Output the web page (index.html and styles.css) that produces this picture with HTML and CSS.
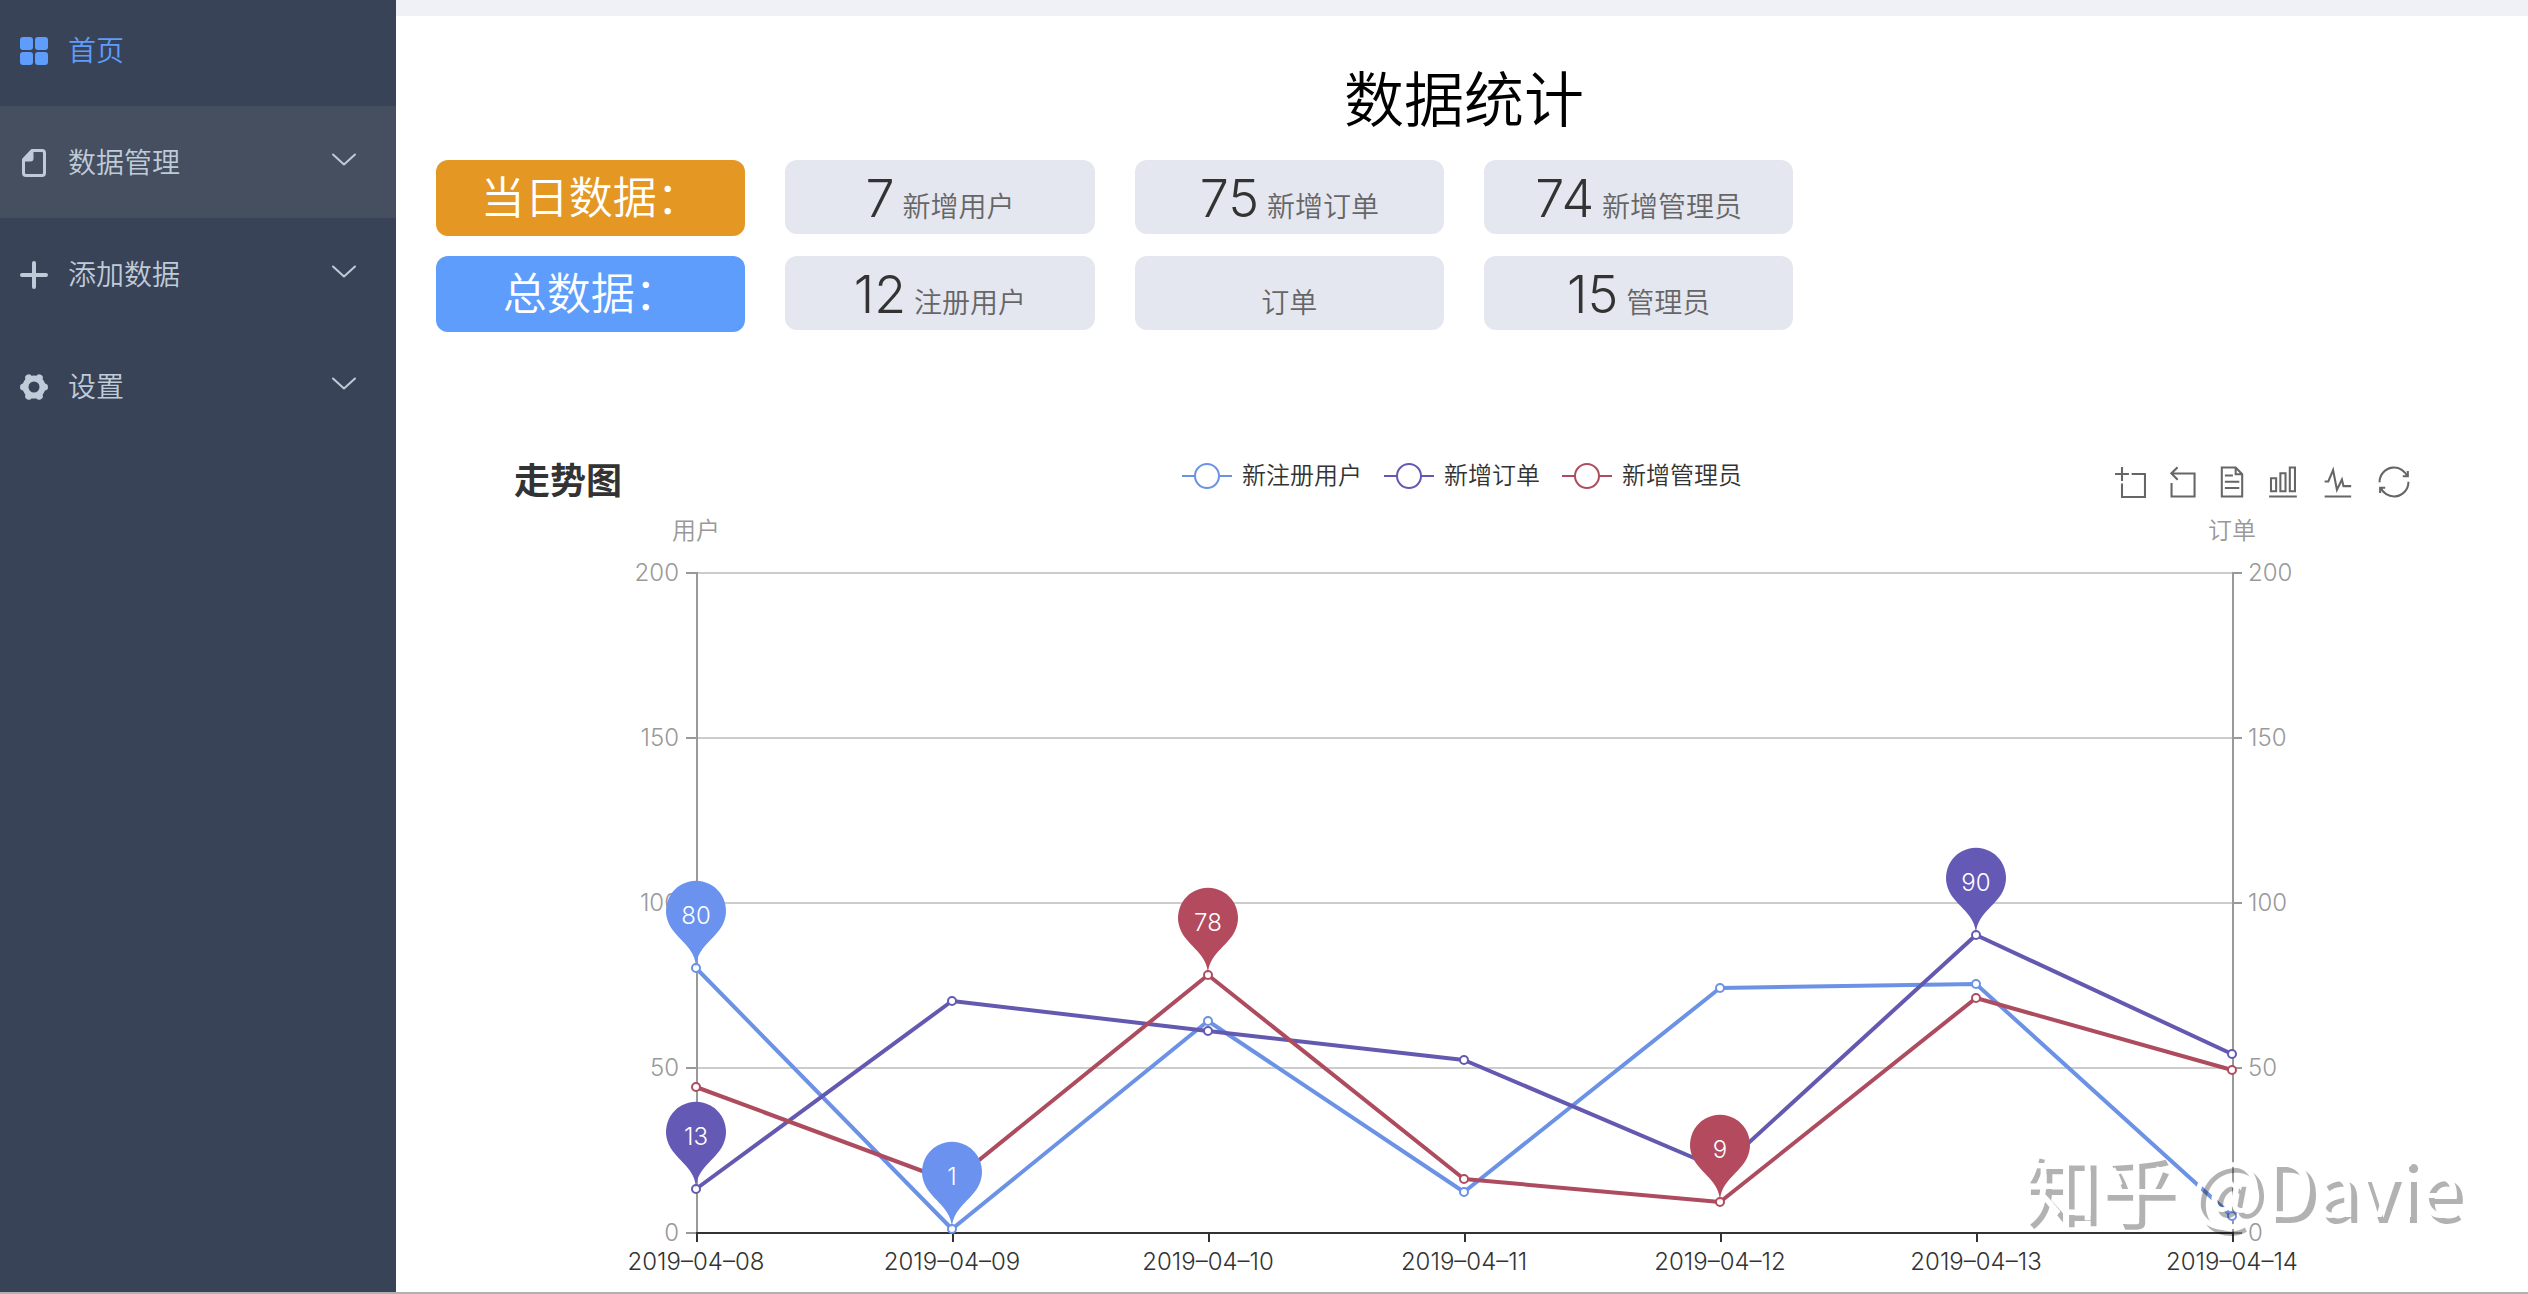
FILE: index.html
```html
<!DOCTYPE html>
<html lang="zh-CN">
<head>
<meta charset="utf-8">
<title>数据统计</title>
<link rel="stylesheet" href="styles.css">
</head>
<body>
<div class="layout">
  <nav class="sidebar">
    <a class="nav-item is-active" href="#home">
      <svg class="nav-icon" viewBox="0 0 28 28" fill="currentColor"><rect x="0" y="0" width="13" height="13" rx="3"/><rect x="15" y="0" width="13" height="13" rx="3"/><rect x="0" y="15" width="13" height="13" rx="3"/><rect x="15" y="15" width="13" height="13" rx="3"/></svg>
      <span class="nav-text">首页</span>
    </a>
    <button class="nav-item is-hover" type="button">
      <svg class="nav-icon" viewBox="0 0 28 28" fill="none" stroke="currentColor" stroke-width="3" stroke-linejoin="round"><path d="M12 1.500H22Q24.500 1.500 24.500 4V24Q24.500 26.500 22 26.500H6Q3.500 26.500 3.500 24V10.500Z"/><path d="M4 11L12 2V9.500Q12 11 10.500 11Z" fill="currentColor"/></svg>
      <span class="nav-text">数据管理</span>
      <svg class="nav-arrow" viewBox="0 0 24 14" fill="none" stroke="currentColor" stroke-width="2" stroke-linecap="round" stroke-linejoin="round"><path d="M1 1.500L12 11.500L23 1.500"/></svg>
    </button>
    <button class="nav-item" type="button">
      <svg class="nav-icon" viewBox="0 0 28 28" fill="none" stroke="currentColor" stroke-width="4" stroke-linecap="round"><path d="M14 2V26M2 14H26"/></svg>
      <span class="nav-text">添加数据</span>
      <svg class="nav-arrow" viewBox="0 0 24 14" fill="none" stroke="currentColor" stroke-width="2" stroke-linecap="round" stroke-linejoin="round"><path d="M1 1.500L12 11.500L23 1.500"/></svg>
    </button>
    <button class="nav-item" type="button">
      <svg class="nav-icon" viewBox="0 0 28 28" fill="none" stroke="currentColor"><circle cx="14" cy="14" r="8.500" stroke-width="6"/><path stroke-width="7" stroke-linecap="round" d="M3.500 14H4.500M23.500 14H24.500M8.700 4.800L9.200 5.700M18.800 22.300L19.300 23.200M19.300 4.800L18.800 5.700M9.200 22.300L8.700 23.200"/></svg>
      <span class="nav-text">设置</span>
      <svg class="nav-arrow" viewBox="0 0 24 14" fill="none" stroke="currentColor" stroke-width="2" stroke-linecap="round" stroke-linejoin="round"><path d="M1 1.500L12 11.500L23 1.500"/></svg>
    </button>
  </nav>
  <main class="main">
    <section class="stats">
      <h1 class="page-title">数据统计</h1>
      <div class="stat-row">
        <div class="stat-label is-today">当日数据：</div>
        <div class="stat"><span class="num">7</span> 新增用户</div>
        <div class="stat"><span class="num">75</span> 新增订单</div>
        <div class="stat"><span class="num">74</span> 新增管理员</div>
      </div>
      <div class="stat-row">
        <div class="stat-label is-total">总数据：</div>
        <div class="stat"><span class="num">12</span> 注册用户</div>
        <div class="stat"><span class="num"></span> 订单</div>
        <div class="stat"><span class="num">15</span> 管理员</div>
      </div>
    </section>
    <section class="trend">
      <header class="trend-head">
        <h2 class="trend-title">走势图</h2>
        <div class="legend">
          <button class="legend-item" type="button"><svg class="legend-mark blue" viewBox="0 0 50 28"><path d="M0 14H50"/><circle cx="25" cy="14" r="12"/></svg>新注册用户</button>
          <button class="legend-item" type="button"><svg class="legend-mark purple" viewBox="0 0 50 28"><path d="M0 14H50"/><circle cx="25" cy="14" r="12"/></svg>新增订单</button>
          <button class="legend-item" type="button"><svg class="legend-mark red" viewBox="0 0 50 28"><path d="M0 14H50"/><circle cx="25" cy="14" r="12"/></svg>新增管理员</button>
        </div>
        <div class="toolbox">
          <button class="tool" type="button" aria-label="区域缩放"><svg width="32" height="32" viewBox="-2 -2 62 62"><path d="M0,13.5h26.9 M13.5,26.9V0 M32.1,13.5H58V58H13.5 V32.1"/></svg></button>
          <button class="tool" type="button" aria-label="区域缩放还原"><svg width="26" height="32" viewBox="7.500 -1 50 62"><path d="M22,1.4L9.9,13.5l12.3,12.3 M10.3,13.5H54.9v44.6 H10.3v-26"/></svg></button>
          <button class="tool" type="button" aria-label="数据视图"><svg width="24" height="32" viewBox="8 -1 46.500 62"><path d="M17.5,17.3H33 M45.4,29.5h-28 M11.5,2v56H51V14.8L38.4,2H11.5z M38.4,2.2v12.7H51 M45.4,41.7h-28"/></svg></button>
          <button class="tool" type="button" aria-label="柱状图"><svg width="30" height="32" viewBox="1 -1 58 62"><path d="M6.7,22.9h10V48h-10V22.9zM24.9,13h10v35h-10V13zM43.2,2h10v46h-10V2zM3.1,58h53.7"/></svg></button>
          <button class="tool" type="button" aria-label="折线图"><svg width="32" height="32" viewBox="-1 -1 62 62"><path d="M4.1,28.9h7.1l9.3-22l7.4,38l9.7-19.7l3,12.8h14.9M4.1,58h51.4"/></svg></button>
          <button class="tool" type="button" aria-label="还原"><svg width="32" height="32" viewBox="-1 -1 62 62"><path d="M47,18.9h9.8V8.7 M56.3,20.1 C52.1,9,40.5,0.6,26.8,2.1C12.6,3.7,1.6,16.2,2.1,30.6 M13,41.1H3.1v10.2 M3.7,39.9c4.2,11.1,15.8,19.5,29.5,18 c14.2-1.6,25.2-14.1,24.7-28.5"/></svg></button>
        </div>
      </header>
      <svg class="chart" viewBox="0 0 2132 782" role="img" aria-label="走势图">
        <defs><path id="pin" d="M-27.100 -44.280A30 30 0 1 1 27.100 -44.280C19.390 -28.020 0 -21 0 0C0 -21 -19.390 -28.020 -27.100 -44.280Z"/></defs>
        <g class="grid"><path d="M301 63H1837M301 228H1837M301 393H1837M301 558H1837"/></g>
        <g class="y-axis"><path d="M301 62V723M290 63H301M290 228H301M290 393H301M290 558H301M290 723H301M1837 62V723M1837 63H1846M1837 228H1846M1837 393H1846M1837 558H1846M1837 723H1846"/></g>
        <g class="x-axis"><path d="M300 723H1838M301 723V732M557 723V732M813 723V732M1069 723V732M1325 723V732M1581 723V732M1837 723V732"/></g>
        <g class="y-text left"><text x="283" y="71">200</text><text x="283" y="236">150</text><text x="283" y="401">100</text><text x="283" y="566">50</text><text x="283" y="731">0</text></g>
        <g class="y-text"><text x="1852" y="71">200</text><text x="1852" y="236">150</text><text x="1852" y="401">100</text><text x="1852" y="566">50</text><text x="1852" y="731">0</text></g>
        <g class="y-text name"><text x="300" y="29">用户</text><text x="1836" y="29">订单</text></g>
        <g class="x-text"><text x="300" y="760">2019–04–08</text><text x="556" y="760">2019–04–09</text><text x="812" y="760">2019–04–10</text><text x="1068" y="760">2019–04–11</text><text x="1324" y="760">2019–04–12</text><text x="1580" y="760">2019–04–13</text><text x="1836" y="760">2019–04–14</text></g>
        <g class="series blue"><path d="M300 458L556 719L812 511L1068 682L1324 478L1580 474L1836 706"/><circle cx="300" cy="458" r="4"/><circle cx="556" cy="719" r="4"/><circle cx="812" cy="511" r="4"/><circle cx="1068" cy="682" r="4"/><circle cx="1324" cy="478" r="4"/><circle cx="1580" cy="474" r="4"/><circle cx="1836" cy="706" r="4"/></g>
        <g class="series purple"><path d="M300 679L556 491L812 521L1068 550L1324 659L1580 425L1836 544"/><circle cx="300" cy="679" r="4"/><circle cx="556" cy="491" r="4"/><circle cx="812" cy="521" r="4"/><circle cx="1068" cy="550" r="4"/><circle cx="1324" cy="659" r="4"/><circle cx="1580" cy="425" r="4"/><circle cx="1836" cy="544" r="4"/></g>
        <g class="series red"><path d="M300 577L556 672L812 465L1068 669L1324 692L1580 488L1836 560"/><circle cx="300" cy="577" r="4"/><circle cx="556" cy="672" r="4"/><circle cx="812" cy="465" r="4"/><circle cx="1068" cy="669" r="4"/><circle cx="1324" cy="692" r="4"/><circle cx="1580" cy="488" r="4"/><circle cx="1836" cy="560" r="4"/></g>
        <g class="pin blue"><use href="#pin" x="300" y="458"/><text x="300" y="414">80</text><use href="#pin" x="556" y="719"/><text x="556" y="675">1</text></g>
        <g class="pin purple"><use href="#pin" x="1580" y="425"/><text x="1580" y="381">90</text><use href="#pin" x="300" y="679"/><text x="300" y="635">13</text></g>
        <g class="pin red"><use href="#pin" x="812" y="465"/><text x="812" y="421">78</text><use href="#pin" x="1324" y="692"/><text x="1324" y="648">9</text></g>
      </svg>
    </section>
  </main>
  <div class="watermark">知乎 @Davie</div>
</div>
</body>
</html>
```
FILE: styles.css
```css
* { box-sizing: border-box; }
body { margin: 0; background: #fff; font-family: Inter, "Noto Sans CJK SC", sans-serif; color: #333; }
button { padding: 0; border: 0; background: none; font: inherit; color: inherit; text-align: left; cursor: pointer; }
h1, h2 { margin: 0; }

.layout { position: relative; display: flex; min-height: 100vh; border-bottom: 2px solid #b0b0b0; }

.sidebar { flex: none; width: 396px; display: flex; flex-direction: column; margin-top: -6px; background: #394357; }
.nav-item { display: flex; align-items: center; gap: 20px; width: 100%; height: 112px; padding: 2px 40px 0 20px; color: #bfcbd9; font-size: 28px; font-weight: 350; text-decoration: none; }
.nav-item.is-active { color: #5e9dfb; }
.nav-item.is-hover { background: #454f60; }
.nav-icon { width: 28px; height: 28px; }
.nav-text { flex: 1; line-height: 40px; }
.nav-arrow { width: 24px; height: 14px; margin-bottom: 6px; }

.main { flex: 1; min-width: 0; border-top: 16px solid #eff1f7; }
.stats { padding: 44px 16px 0 20px; }
.page-title { font-size: 60px; font-weight: 350; line-height: 80px; color: #000; text-align: center; }
.stat-row { display: grid; grid-template-columns: repeat(6, 1fr); align-items: start; margin-top: 20px; }
.stat-row > div { margin: 0 20px; border-radius: 12px; text-align: center; white-space: nowrap; }
.stat-label { height: 76px; font-size: 44px; font-weight: 350; line-height: 76px; color: #fff; }
.is-today { background: #e59724; }
.is-total { background: #5e9dfb; }
.stat { height: 74px; padding-top: 2px; line-height: 74px; background: #e5e7f0; font-size: 28px; font-weight: 350; color: #666; }
.num { font-size: 52px; font-weight: 350; color: #333; }

.trend { padding-top: 120px; }
.trend-head { display: grid; grid-template-columns: 1fr auto 1fr; align-items: start; padding: 0 118px; height: 58px; }
.trend-title { font-size: 36px; font-weight: 700; line-height: 58px; }
.legend { display: flex; gap: 22px; padding-top: 10px; }
.legend-item { display: flex; align-items: center; gap: 10px; font-size: 24px; line-height: 28px; font-weight: 350; }
.legend-mark { width: 50px; height: 28px; fill: #fff; stroke-width: 2; }
.toolbox { display: flex; justify-content: flex-end; gap: 24px; padding-top: 14px; }
.tool svg { display: block; fill: none; stroke: #666; stroke-width: 4; }

.chart { display: block; width: 100%; height: auto; font-size: 24px; font-weight: 300; }
.grid { stroke: #ccc; stroke-width: 2; }
.y-axis { fill: none; stroke: #999; stroke-width: 2; }
.x-axis { fill: none; stroke: #333; stroke-width: 2; }
.y-text { fill: #999; }
.left { text-anchor: end; }
.name, .x-text, .pin text { text-anchor: middle; }
.name { font-weight: 350; }
.x-text { fill: #333; }
.blue { stroke: #6c92e6; }
.purple { stroke: #6459b0; }
.red { stroke: #ae4c5f; }
.series path { fill: none; stroke-width: 4; stroke-linejoin: bevel; }
.series circle { fill: #fff; stroke-width: 2; }
.pin { stroke: none; }
.pin.blue { fill: #6a92ee; }
.pin.purple { fill: #6459b5; }
.pin.red { fill: #b34a5e; }
.pin text { fill: #fff; }

.watermark { position: absolute; right: 68px; bottom: 60px; font: 400 76px/96px "Noto Sans CJK SC", sans-serif; color: #fff; text-shadow: 6px 6px 0 rgba(0, 0, 0, 0.3); white-space: nowrap; }
```
